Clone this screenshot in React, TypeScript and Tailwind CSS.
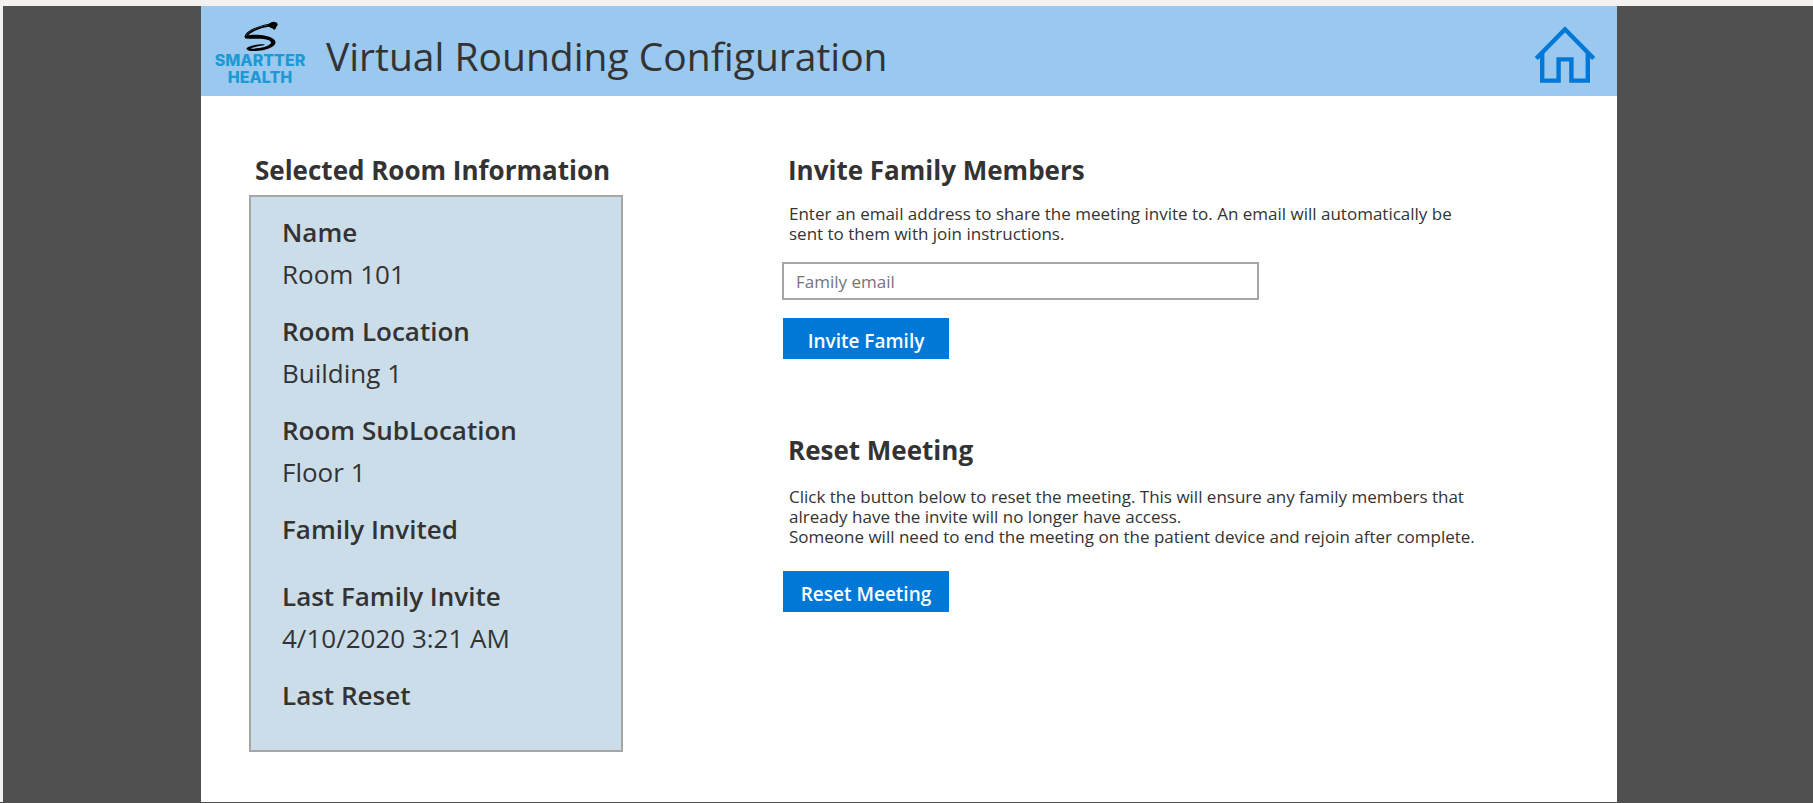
import React, { useState } from "react";

type RoomField = { label: string; value: string };

const roomFields: RoomField[] = [
  { label: "Name", value: "Room 101" },
  { label: "Room Location", value: "Building 1" },
  { label: "Room SubLocation", value: "Floor 1" },
  { label: "Family Invited", value: "" },
  { label: "Last Family Invite", value: "4/10/2020 3:21 AM" },
  { label: "Last Reset", value: "" },
];

function Logo() {
  return (
    <div className="flex w-[92px] flex-col items-center pt-[5px] font-['Inter',sans-serif] text-base leading-[17px] font-extrabold text-[#1b9ad6]">
      <svg viewBox="112 34 102 88" className="mb-px h-[30px] w-9" aria-hidden="true">
        <path
          d="M117 78C150 71 178 74 192 81C210 88 212 99 204 106C195 115 172 121 150 122C136 123 124 121 123 114C130 107 155 101 178 102L172 106C155 108 140 112 135 115C160 116 186 109 194 101C198 94 190 89 172 87C155 85 140 88 120 85Z"
          fill="#000"
        />
        <path d="M121 82C114 72 146 50 196 42" stroke="#000" strokeWidth="3" fill="none" />
        <path d="M124 80C126 70 150 54 194 47" stroke="#000" strokeWidth="5" fill="none" />
        <path d="M190 41L196 38L204 36L213 39L215 46L211 51L208 58L204 60L200 56L194 54L186 49Z" fill="#000" />
      </svg>
      <span>SMARTTER</span>
      <span>HEALTH</span>
    </div>
  );
}

function HomeIcon() {
  return (
    <svg viewBox="0 0 62 58" className="h-[58px] w-[62px]" fill="none" stroke="#0078d7" strokeWidth="4.4" aria-hidden="true">
      <path d="M2.3 33.5L31 4.3L59.7 33.5" />
      <path d="M8.2 28V55.6H24.6V34.4H37.4V55.6H53.8V28" />
    </svg>
  );
}

function ActionButton({ children }: { children: React.ReactNode }) {
  return (
    <button type="button" className="ml-px h-[41px] w-[166px] bg-[#0078d7] pt-1 text-[19px] leading-6 font-semibold text-white">
      {children}
    </button>
  );
}

function SectionTitle({ children }: { children: React.ReactNode }) {
  return <h2 className="pl-1.5 text-[26px] leading-10 font-bold">{children}</h2>;
}

export default function App() {
  const [email, setEmail] = useState("");

  return (
    <div className="flex min-h-screen flex-col border-b border-[#505050] bg-[#f3f2f1] pt-1.5 pl-[3px] font-['Open_Sans','Noto_Sans',sans-serif] text-[#333333]">
      <div className="grid flex-1 grid-cols-[198fr_1416fr_196fr] bg-[#505050]">
        <div className="col-start-2 bg-white">
          <header className="flex h-[90px] items-center bg-[#9ac8ee] pr-[21px] pl-[13px]">
            <Logo />
            <h1 className="flex-1 pt-2.5 pl-5 text-[39px] leading-[54px]">Virtual Rounding Configuration</h1>
            <a href="#home" aria-label="Home" className="pt-1.5">
              <HomeIcon />
            </a>
          </header>

          <main className="flex gap-[159px] px-12 pt-[54px] pb-12">
            <section className="w-[374px] shrink-0">
              <SectionTitle>Selected Room Information</SectionTitle>
              <dl className="mt-[5px] flex flex-col gap-[15px] border-2 border-[#a6a6a6] bg-[#cbdde9] pt-3.5 pb-6 pl-[31px] text-[26px] leading-[42px]">
                {roomFields.map((field) => (
                  <div key={field.label}>
                    <dt className="font-semibold">{field.label}</dt>
                    <dd className="min-h-[10px]">{field.value}</dd>
                  </div>
                ))}
              </dl>
            </section>

            <div className="max-w-[706px] flex-1">
              <section>
                <SectionTitle>Invite Family Members</SectionTitle>
                <p className="mt-3.5 pl-[7px] text-[17px] leading-5">
                  Enter an email address to share the meeting invite to. An email will automatically be sent to them with
                  join instructions.
                </p>
                <input
                  type="email"
                  aria-label="Family email"
                  placeholder="Family email"
                  value={email}
                  onChange={(event) => setEmail(event.target.value)}
                  className="my-[18px] block h-[38px] w-full max-w-[477px] border-2 border-[#a6a6a6] bg-white px-3 text-[17px] leading-6 placeholder:text-[#757575]"
                />
                <ActionButton>Invite Family</ActionButton>
              </section>

              <section className="mt-[71px]">
                <SectionTitle>Reset Meeting</SectionTitle>
                <p className="mt-[17px] mb-6 pl-[7px] text-[17px] leading-5">
                  Click the button below to reset the meeting. This will ensure any family members that already have the
                  invite will no longer have access.
                  <br />
                  Someone will need to end the meeting on the patient device and rejoin after complete.
                </p>
                <ActionButton>Reset Meeting</ActionButton>
              </section>
            </div>
          </main>
        </div>
      </div>
    </div>
  );
}
